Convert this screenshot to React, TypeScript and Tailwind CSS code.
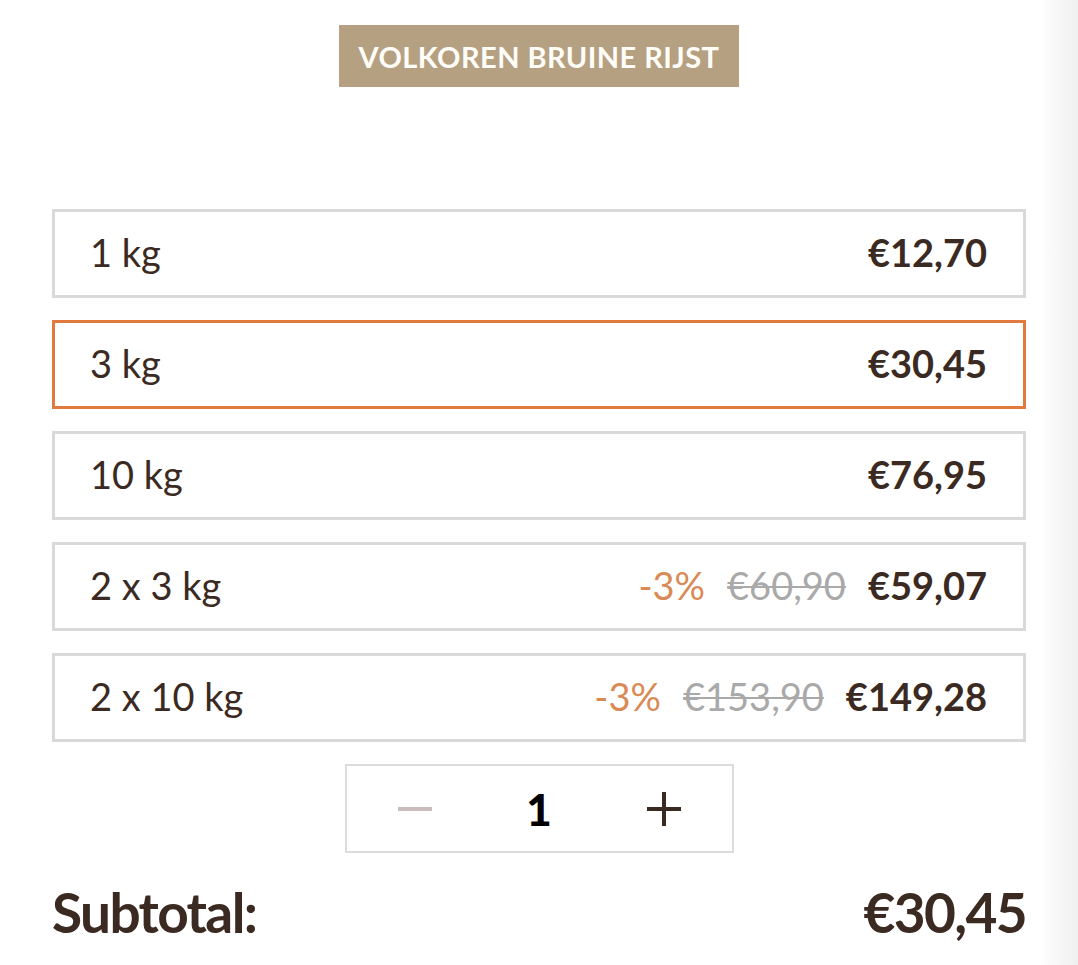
import React, { useState } from "react";

type Option = {
  label: string;
  price: string;
  discount?: string;
  oldPrice?: string;
};

const options: Option[] = [
  { label: "1 kg", price: "€12,70" },
  { label: "3 kg", price: "€30,45" },
  { label: "10 kg", price: "€76,95" },
  { label: "2 x 3 kg", price: "€59,07", discount: "-3%", oldPrice: "€60,90" },
  { label: "2 x 10 kg", price: "€149,28", discount: "-3%", oldPrice: "€153,90" },
];

export default function App() {
  const [selected, setSelected] = useState(1);
  const [qty, setQty] = useState(1);

  return (
    <div className="relative min-h-screen bg-white text-[#3b2a22] font-['Lato',sans-serif]">
      <div className="pointer-events-none absolute right-0 top-0 bottom-0 w-[38px] bg-gradient-to-r from-white to-[#efefef]" />

      <div className="px-[52px] pt-[25px]">
        <div className="flex justify-center">
          <div className="h-[62px] px-[20px] flex items-center bg-[#b6a082] text-[#fffdf7] text-[29px] font-bold tracking-[0.015em] leading-none">
            VOLKOREN BRUINE RIJST
          </div>
        </div>

        <div className="mt-[122px] flex flex-col gap-[22px]">
          {options.map((o, i) => (
            <button
              key={o.label}
              onClick={() => setSelected(i)}
              className={
                "h-[89px] w-full flex items-center justify-between pl-[35px] pr-[36px] bg-white text-left border-[3px] " +
                (selected === i ? "border-[#e07a3f]" : "border-[#d9d9d9]")
              }
            >
              <span className="text-[38px] leading-none -mt-[3px]">{o.label}</span>
              <span className="flex items-center text-[38px] leading-none -mt-[3px]">
                {o.discount && (
                  <span className="text-[#d98a55] mr-[22px]">{o.discount}</span>
                )}
                {o.oldPrice && (
                  <span className="text-[#a9a9a9] line-through decoration-2 mr-[22px]">{o.oldPrice}</span>
                )}
                <span className="font-bold">{o.price}</span>
              </span>
            </button>
          ))}
        </div>

        <div className="mt-[22px] flex justify-center">
          <div className="w-[389px] h-[89px] border-2 border-[#dcdcdc] flex items-center justify-between px-[48px]">
            <button onClick={() => setQty(Math.max(1, qty - 1))} className="w-[40px] h-[40px] flex items-center justify-center">
              <svg width="38" height="38" viewBox="0 0 38 38">
                <path d="M2 19h34" stroke="#c9bebb" strokeWidth="4" />
              </svg>
            </button>
            <span className="text-[44px] font-black text-black leading-none">{qty}</span>
            <button onClick={() => setQty(qty + 1)} className="w-[40px] h-[40px] flex items-center justify-center">
              <svg width="38" height="38" viewBox="0 0 38 38">
                <path d="M2 19h34M19 2v34" stroke="#3b2a22" strokeWidth="4" />
              </svg>
            </button>
          </div>
        </div>

        <div className="mt-[32px] flex items-center justify-between text-[55px] font-bold leading-none tracking-[-0.03em]">
          <span>Subtotal:</span>
          <span>€30,45</span>
        </div>
      </div>
    </div>
  );
}
